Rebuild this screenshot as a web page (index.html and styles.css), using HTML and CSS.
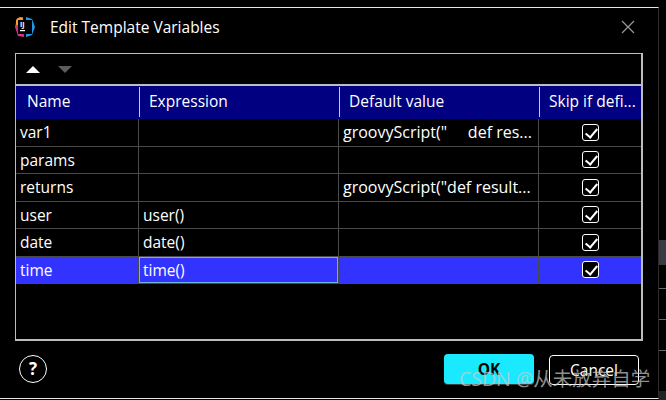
FILE: index.html
```html
<!DOCTYPE html>
<html lang="en">
<head>
    <meta charset="UTF-8">
    <title>Edit Template Variables</title>
    <link rel="stylesheet" href="styles.css">
</head>
<body>
<div class="screen">
    <div class="dialog">
        <div class="title-bar">
            <svg class="logo" width="20" height="20" viewBox="0 0 20 20">
                <path d="M2 1 L8 0 L9 20 L3 19 L0 10 Z" fill="#e8327c"/>
                <path d="M1 3 L5 0 L8 1 L7 7 L1 8 Z" fill="#f0a02c"/>
                <path d="M1 10 L4 9 L5 17 L3 18 Z" fill="#c02a9a"/>
                <path d="M11 0 L17 2 L20 10 L17 18 L11 20 Z" fill="#1e9be8"/>
                <rect x="3" y="3" width="14" height="14" fill="#000"/>
                <text class="logo-text" x="5" y="10">IJ</text>
                <rect x="5" y="13" width="5" height="1.2" fill="#fff"/>
            </svg>
            <span class="title">Edit Template Variables</span>
            <svg class="close" width="14" height="14" viewBox="0 0 14 14">
                <path d="M1 1 L13 13 M13 1 L1 13" stroke="#9a9a9a" stroke-width="1.2" fill="none"/>
            </svg>
        </div>

        <div class="panel">
            <div class="toolbar">
                <span class="arrow-up"></span>
                <span class="arrow-down"></span>
            </div>
            <div class="row head">
                <div class="cell">Name</div>
                <div class="cell">Expression</div>
                <div class="cell">Default value</div>
                <div class="cell">Skip if defi...</div>
            </div>
            <div class="row">
                <div class="cell">var1</div>
                <div class="cell"></div>
                <div class="cell script">groovyScript("&nbsp;&nbsp;&nbsp;&nbsp; def res...</div>
                <div class="cell check-cell"><span class="check"></span></div>
            </div>
            <div class="row">
                <div class="cell">params</div>
                <div class="cell"></div>
                <div class="cell"></div>
                <div class="cell check-cell"><span class="check"></span></div>
            </div>
            <div class="row">
                <div class="cell">returns</div>
                <div class="cell"></div>
                <div class="cell script">groovyScript("def result...</div>
                <div class="cell check-cell"><span class="check"></span></div>
            </div>
            <div class="row">
                <div class="cell">user</div>
                <div class="cell">user()</div>
                <div class="cell"></div>
                <div class="cell check-cell"><span class="check"></span></div>
            </div>
            <div class="row">
                <div class="cell">date</div>
                <div class="cell">date()</div>
                <div class="cell"></div>
                <div class="cell check-cell"><span class="check"></span></div>
            </div>
            <div class="row selected">
                <div class="cell">time</div>
                <div class="cell editing">time()</div>
                <div class="cell"></div>
                <div class="cell check-cell"><span class="check"></span></div>
            </div>
        </div>

        <div class="footer">
            <div class="help">?</div>
            <div class="buttons">
                <button class="btn btn-ok">OK</button>
                <button class="btn btn-cancel">Cancel</button>
            </div>
        </div>
    </div>
    <div class="side">
        <div class="side-thumb"></div>
        <div class="side-line line-1"></div>
        <div class="side-line line-2"></div>
        <div class="side-line line-3"></div>
        <div class="side-end"></div>
    </div>
    <div class="watermark">CSDN @从未放弃自学</div>
</div>
</body>
</html>
```

FILE: styles.css
```css
* {
    box-sizing: border-box;
}

body {
    margin: 0;
    background: #000;
    font-family: "Open Sans", "Noto Sans", "Noto Sans CJK SC", sans-serif;
    color: #fff;
}

.screen {
    position: relative;
    display: flex;
    width: 666px;
    height: 400px;
    overflow: hidden;
    padding-top: 7px;
    background: #000;
}

.dialog {
    width: 659px;
    height: 392px;
    border-top: 1px solid #e6e6e6;
    border-right: 1px solid #2c2c2c;
    border-bottom: 1px solid #e6e6e6;
}

.side {
    display: flex;
    flex-direction: column;
    flex: 1;
    padding-top: 233px;
}

.side-thumb {
    height: 26px;
    background: #3a3a44;
}

.side-line {
    height: 1px;
    background: #6a6a6a;
}

.line-1 {
    margin-top: 23px;
}

.line-2,
.line-3 {
    margin-top: 30px;
}

.side-end {
    height: 10px;
    margin-top: 40px;
    background: #222;
}

.title-bar {
    display: flex;
    align-items: center;
    height: 45px;
    padding: 0 23px 7px 15px;
}

.logo {
    margin-right: 15px;
}

.logo-text {
    font-size: 7px;
    font-weight: 700;
    fill: #fff;
}

.title {
    font-size: 15.5px;
    flex: 1;
}

.panel {
    width: 628px;
    height: 288px;
    margin-left: 15px;
    border: 2px solid #bdbdbd;
    border-width: 1px 2px 2px 1px;
}

.toolbar {
    display: flex;
    align-items: center;
    gap: 18px;
    height: 32px;
    padding: 0 10px 0 10px;
    border-bottom: 2px solid #bdbdbd;
}

.arrow-up {
    border-left: 7px solid transparent;
    border-right: 7px solid transparent;
    border-bottom: 7px solid #fff;
}

.arrow-down {
    border-left: 7px solid transparent;
    border-right: 7px solid transparent;
    border-top: 7px solid #5c5c5c;
}

.row {
    display: grid;
    grid-template-columns: 123px 200px 200px 1fr;
    height: 27.5px;
    font-size: 15.5px;
    line-height: 26px;
    border-bottom: 1px solid #4a4a4a;
}

.cell {
    padding-left: 4px;
    border-right: 1px solid #4a4a4a;
    white-space: nowrap;
    overflow: hidden;
}

.cell:last-child {
    border-right: none;
}

.script {
    font-size: 16px;
}

.head {
    grid-template-columns: 124px 200px 200px 1fr;
    height: 33px;
    background: #000080;
    border-bottom: none;
}

.head .cell {
    height: 30px;
    margin-top: 1px;
    padding-left: 9px;
    line-height: 29px;
    border-right-color: #c8c8e8;
}

.head .cell:first-child {
    padding-left: 11px;
}

.selected {
    background: #3333ff;
}

.editing {
    box-shadow: inset 0 0 0 1px #6fb7d8;
}

.check-cell {
    display: flex;
    align-items: center;
    justify-content: center;
    padding-left: 0;
}

.check {
    position: relative;
    width: 17px;
    height: 17px;
    border: 1px solid #fff;
    border-radius: 3px;
    background: #000;
}

.check::after {
    content: "";
    position: absolute;
    left: 5px;
    top: 1px;
    width: 5px;
    height: 10px;
    border: solid #fff;
    border-width: 0 2.5px 2.5px 0;
    transform: rotate(40deg);
}

.footer {
    display: flex;
    align-items: flex-start;
    justify-content: space-between;
    padding: 13px 19px 0 19px;
}

.help {
    width: 28px;
    height: 28px;
    margin-top: 1px;
    border: 1.5px solid #fff;
    border-radius: 50%;
    text-align: center;
    font-size: 17px;
    font-weight: 700;
    line-height: 25px;
}

.buttons {
    display: flex;
    gap: 15px;
}

.btn {
    width: 90px;
    height: 30px;
    border-radius: 4px;
    font-family: inherit;
    font-size: 15.5px;
}

.btn-ok {
    background: #1aeaff;
    border: none;
    color: #000;
    font-weight: 700;
    box-shadow: 0 1px 1px #444;
}

.btn-cancel {
    margin-top: 1px;
    background: #000;
    border: 1px solid #fff;
    color: #fff;
}

.watermark {
    position: absolute;
    left: 459px;
    top: 366px;
    font-size: 19.5px;
    line-height: 26px;
    white-space: nowrap;
    color: rgba(200, 200, 200, 0.72);
}
```
